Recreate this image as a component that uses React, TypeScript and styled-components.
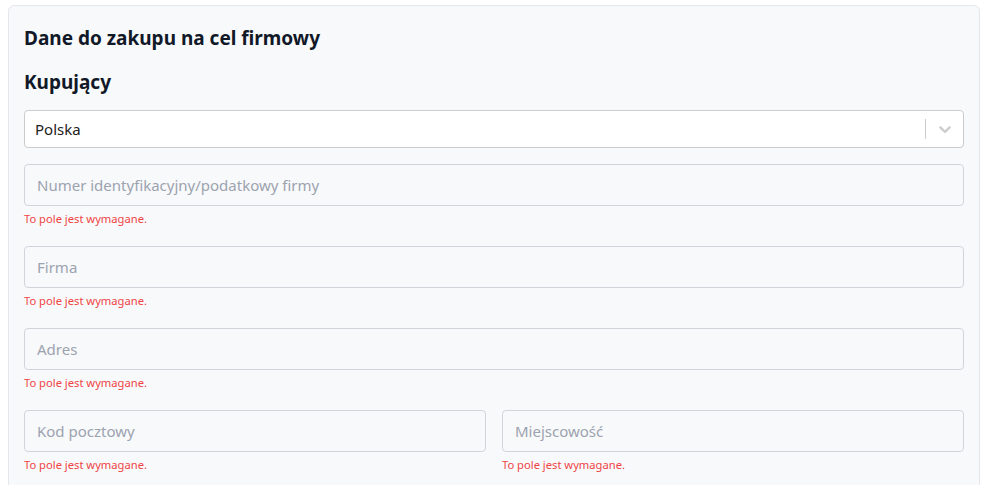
import React from "react";
import styled, { createGlobalStyle } from "styled-components";

const Global = createGlobalStyle`
  html, body { margin: 0; padding: 0; background: #ffffff; }
  body { font-family: "Noto Sans", "Segoe UI", sans-serif; color: #111827; }
  * { box-sizing: border-box; }
`;

const Page = styled.div`
  padding: 5px 10px 0 8px;
  height: 485px;
  overflow: hidden;
`;

const Card = styled.section`
  background: #f8f9fb;
  border: 1px solid #e5e7eb;
  border-radius: 6px;
  padding: 18px 15px 40px 15px;
  display: flex;
  flex-direction: column;
`;

const Title = styled.h2`
  margin: 0;
  font-size: 19px;
  font-weight: 700;
  line-height: 28px;
  color: #111827;
`;

const Subtitle = styled.h3`
  margin: 16px 0 14px;
  font-size: 19px;
  font-weight: 700;
  line-height: 28px;
  color: #111827;
`;

const SelectBox = styled.div`
  height: 38px;
  background: #ffffff;
  border: 1px solid #cccccc;
  border-radius: 4px;
  display: flex;
  align-items: center;
  padding-left: 10px;
  font-size: 15px;
  color: #222;
  margin-bottom: 16px;
`;

const SelectValue = styled.div`
  flex: 1;
`;

const Separator = styled.span`
  width: 1px;
  height: 20px;
  background: #cccccc;
`;

const Indicator = styled.div`
  width: 37px;
  display: flex;
  align-items: center;
  justify-content: center;
  color: #cccccc;
`;

const Fields = styled.div`
  display: flex;
  flex-direction: column;
  gap: 6px;
`;

const Row = styled.div<{ $cols: number }>`
  display: grid;
  grid-template-columns: repeat(${(p) => p.$cols}, 1fr);
  gap: 16px;
`;

const Field = styled.div`
  display: flex;
  flex-direction: column;
`;

const Input = styled.input`
  height: 42px;
  width: 100%;
  border: 1px solid #d1d5db;
  border-radius: 4px;
  background: transparent;
  padding: 0 12px;
  font-family: inherit;
  font-size: 15px;
  color: #111827;
  outline: none;
  &::placeholder { color: #9ca3af; }
`;

const Error = styled.div`
  font-size: 11.2px;
  line-height: 16px;
  color: #ef4444;
  margin-top: 5px;
  height: 29px;
`;

const Chevron = () => (
  <svg width="20" height="20" viewBox="0 0 20 20" fill="currentColor" aria-hidden="true">
    <path d="M4.516 7.548c0.436-0.446 1.043-0.481 1.576 0l3.908 3.747 3.908-3.747c0.533-0.481 1.141-0.446 1.574 0 0.436 0.445 0.408 1.197 0 1.615-0.406 0.418-4.695 4.502-4.695 4.502-0.217 0.223-0.502 0.335-0.787 0.335s-0.57-0.112-0.789-0.335c0 0-4.287-4.084-4.695-4.502s-0.436-1.170 0-1.615z" />
  </svg>
);

const REQ = "To pole jest wymagane.";

const TextField = ({ placeholder }: { placeholder: string }) => (
  <Field>
    <Input placeholder={placeholder} />
    <Error>{REQ}</Error>
  </Field>
);

export default function App() {
  return (
    <>
      <Global />
      <Page>
        <Card>
          <Title>Dane do zakupu na cel firmowy</Title>
          <Subtitle>Kupujący</Subtitle>
          <SelectBox>
            <SelectValue>Polska</SelectValue>
            <Separator />
            <Indicator>
              <Chevron />
            </Indicator>
          </SelectBox>
          <Fields>
            <TextField placeholder="Numer identyfikacyjny/podatkowy firmy" />
            <TextField placeholder="Firma" />
            <TextField placeholder="Adres" />
            <Row $cols={2}>
              <TextField placeholder="Kod pocztowy" />
              <TextField placeholder="Miejscowość" />
            </Row>
          </Fields>
        </Card>
      </Page>
    </>
  );
}
